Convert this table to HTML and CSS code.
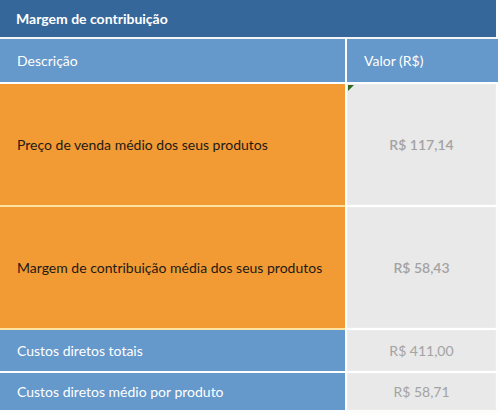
FILE: index.html
```html
<!DOCTYPE html>
<html lang="pt-BR">
<head>
<meta charset="utf-8">
<link rel="stylesheet" href="styles.css">
</head>
<body>
<div class="sheet">
  <div class="title">Margem de contribuição</div>
  <div class="grid">
    <div class="cell head">Descrição</div>
    <div class="cell head">Valor (R$)</div>

    <div class="cell orange tall">Preço de venda médio dos seus produtos</div>
    <div class="cell value tall bold flagged">R$ 117,14</div>

    <div class="cell orange tall">Margem de contribuição média dos seus produtos</div>
    <div class="cell value tall bold">R$ 58,43</div>

    <div class="cell blue r1">Custos diretos totais</div>
    <div class="cell value r1">R$ 411,00</div>

    <div class="cell blue r2">Custos diretos médio por produto</div>
    <div class="cell value r2">R$ 58,71</div>
  </div>
</div>
</body>
</html>
```

FILE: styles.css
```css
html, body {
  margin: 0;
  padding: 0;
  background: #fdfdfb;
}
body {
  font-family: "Lato", "Open Sans", sans-serif;
  font-size: 14px;
  width: 500px;
  height: 414px;
  overflow: hidden;
}
.sheet {
  width: 496px;
  display: flex;
  flex-direction: column;
  gap: 2px;
  background: #f4f4f4;
}
.title {
  height: 37px;
  background: #35679b;
  color: #ffffff;
  font-weight: 700;
  display: flex;
  align-items: center;
  padding-left: 16px;
  padding-bottom: 1px;
  box-sizing: border-box;
}
.grid {
  display: grid;
  grid-template-columns: 345px 151px;
  grid-template-rows: 43px 121px 121px 41px 37px;
  column-gap: 2px;
  row-gap: 2px;
  background: #ffffff;
}
.cell {
  display: flex;
  align-items: center;
  padding-left: 17px;
  color: #ffffff;
  box-sizing: border-box;
}
.head {
  background: #6598cb;
}
.orange {
  background: #f29a33;
  color: #1e1a16;
  box-shadow: 0 2px 0 #fbe3a4;
}
.blue {
  background: #6598cb;
}
.value {
  background: #e9e9e9;
  color: #a3a3a3;
  justify-content: center;
  padding-left: 0;
  margin-right: 2px;
  border: 1px solid #ececec;
}
.bold {
  font-weight: 600;
}
.flagged {
  position: relative;
}
.flagged::before {
  content: "";
  position: absolute;
  left: 0;
  top: 0;
  border-top: 6px solid #2f6b1f;
  border-right: 6px solid transparent;
}
```
